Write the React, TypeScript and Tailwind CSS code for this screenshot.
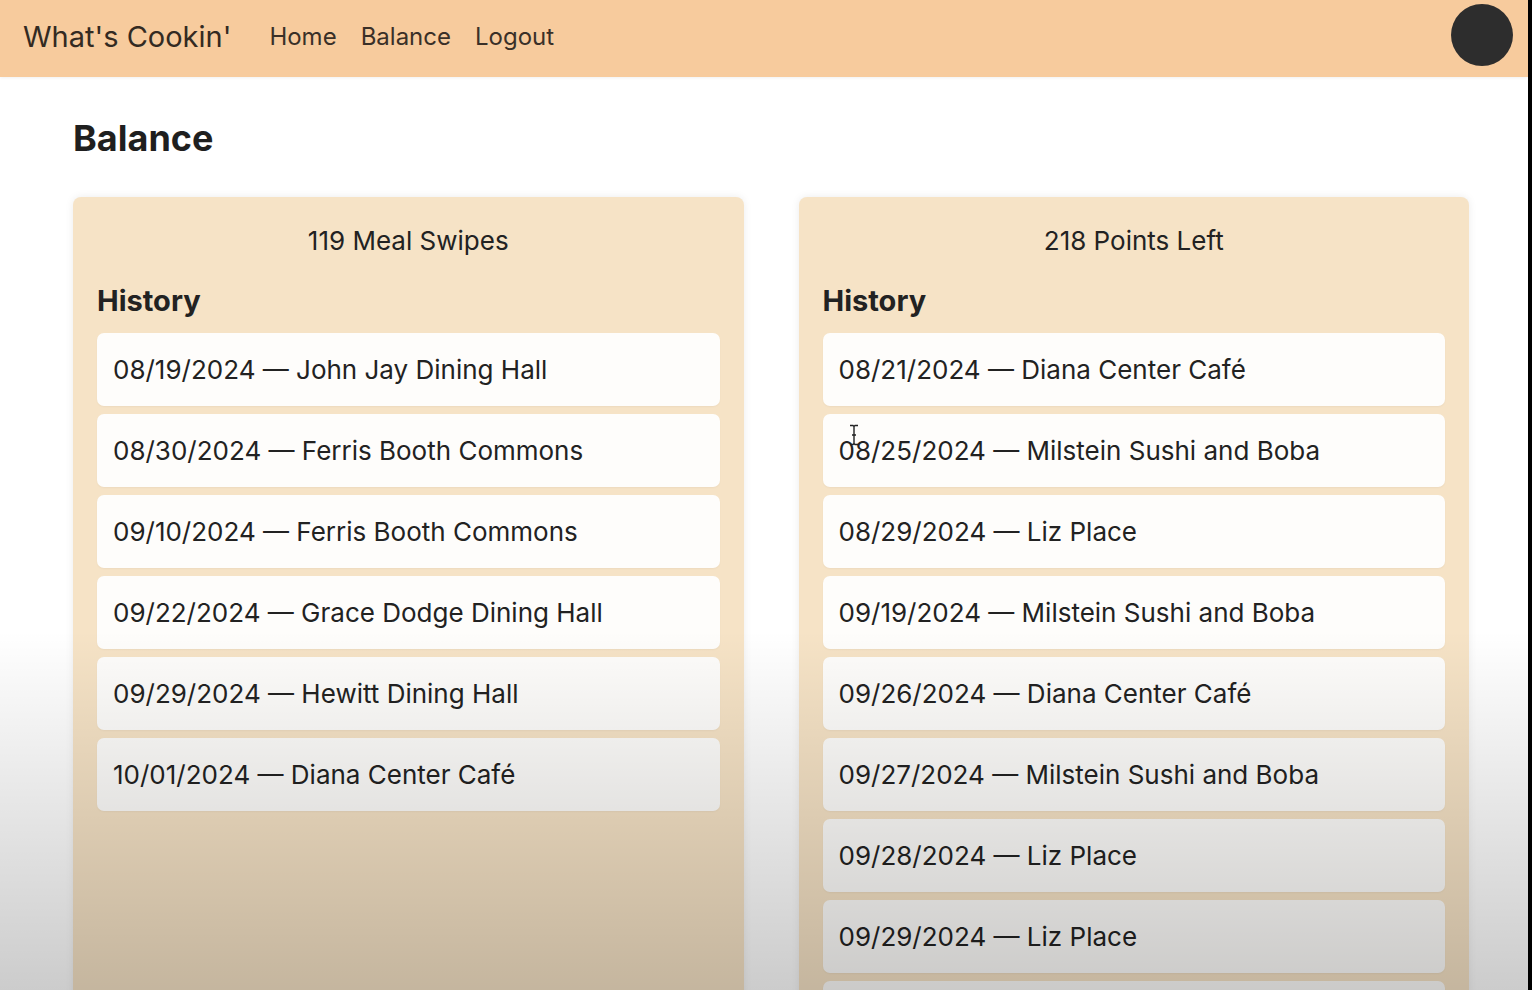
import React from "react";

const swipes = [
  "08/19/2024 — John Jay Dining Hall",
  "08/30/2024 — Ferris Booth Commons",
  "09/10/2024 — Ferris Booth Commons",
  "09/22/2024 — Grace Dodge Dining Hall",
  "09/29/2024 — Hewitt Dining Hall",
  "10/01/2024 — Diana Center Café",
];

const points = [
  "08/21/2024 — Diana Center Café",
  "08/25/2024 — Milstein Sushi and Boba",
  "08/29/2024 — Liz Place",
  "09/19/2024 — Milstein Sushi and Boba",
  "09/26/2024 — Diana Center Café",
  "09/27/2024 — Milstein Sushi and Boba",
  "09/28/2024 — Liz Place",
  "09/29/2024 — Liz Place",
  "09/30/2024 — Liz Place",
];

function Card({ title, items }: { title: string; items: string[] }) {
  return (
    <div className="bg-[#f6e3c6] rounded-[8px] shadow-[0_0_8px_rgba(0,0,0,0.08)] px-[24px] pt-[24px] pb-[24px] min-h-[900px]">
      <div className="text-center text-[26px] leading-[39px] text-[#222]">{title}</div>
      <div className="mt-[20px] mb-[11px] text-[29px] leading-[42px] font-bold text-[#222]">History</div>
      <div className="flex flex-col gap-[8px]">
        {items.map((t) => (
          <div key={t} className="bg-[#fefdfb] rounded-[7px] px-[16px] py-[17px] text-[26px] leading-[39px] text-[#222] shadow-[0_1px_2px_rgba(0,0,0,0.04)]">
            {t}
          </div>
        ))}
      </div>
    </div>
  );
}

export default function App() {
  return (
    <div className="relative w-[1532px] h-[990px] overflow-hidden flex bg-black" style={{ fontFamily: "Inter, 'Liberation Sans', sans-serif" }}>
      <div className="w-[1528px] h-full bg-white flex flex-col">
        <header className="h-[77px] shrink-0 bg-[#f7cb9d] flex items-center pl-[23px] pr-[15px] pb-[4px] shadow-[0_1px_3px_rgba(0,0,0,0.06)]">
          <div className="text-[29px] text-[#332a22]">What's Cookin'</div>
          <nav className="ml-[38px] flex gap-[24px] text-[24px] text-[#3a3028]">
            <span>Home</span>
            <span>Balance</span>
            <span>Logout</span>
          </nav>
          <div className="ml-auto self-start mt-[4px] w-[62px] h-[62px] rounded-full bg-[#2d2d2d]" />
        </header>
        <main className="pl-[73px] pr-[59px]">
          <h1 className="mt-[37px] text-[36px] leading-[49px] font-bold text-[#1f1f1f]">Balance</h1>
          <div className="mt-[34px] grid grid-cols-2 gap-[55px]">
            <Card title="119 Meal Swipes" items={swipes} />
            <Card title="218 Points Left" items={points} />
          </div>
        </main>
      </div>
      <div className="pointer-events-none absolute left-0 right-[4px] bottom-0 h-[360px] bg-gradient-to-b from-transparent to-black/20" />
      <svg className="absolute left-[848px] top-[424px]" width="12" height="22" viewBox="0 0 12 22">
        <path d="M2 1.5h3l1 1 1-1h3M6 2.5v17M2 20.5h3l1-1 1 1h3M4 11h4" stroke="#222" strokeWidth="1.4" fill="none" />
      </svg>
    </div>
  );
}
